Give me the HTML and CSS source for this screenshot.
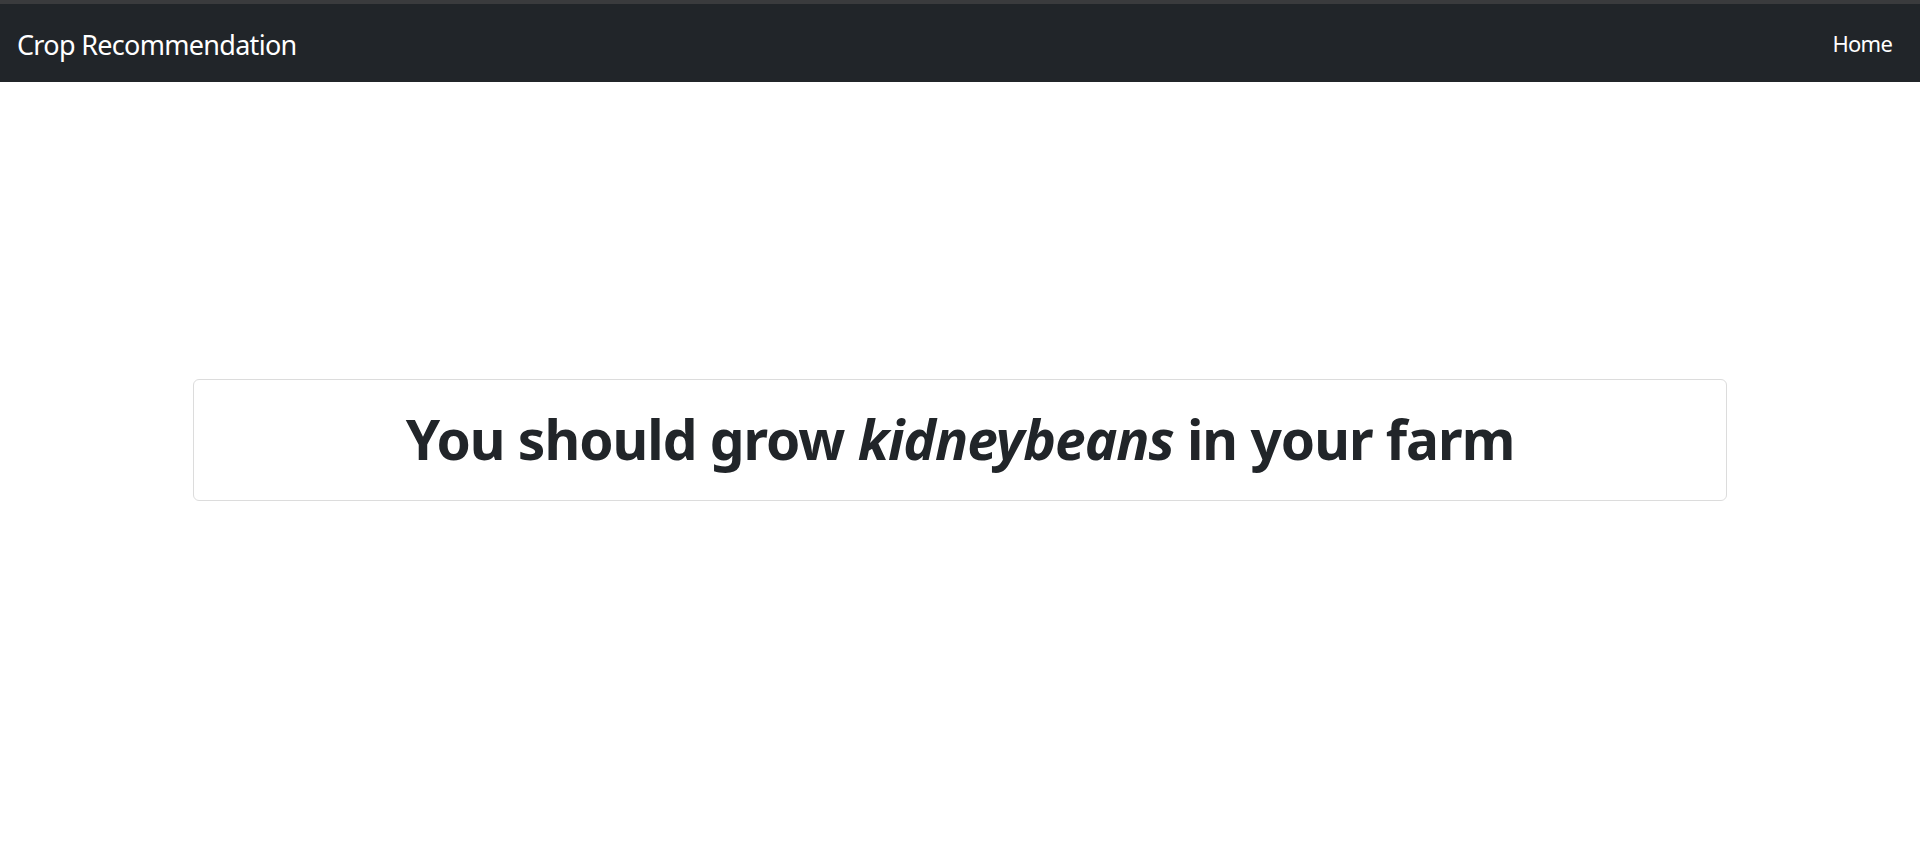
FILE: index.html
```html
<!DOCTYPE html>
<html lang="en">
<head>
<meta charset="utf-8">
<title>Crop Recommendation</title>
<link rel="stylesheet" href="styles.css">
</head>
<body>
<div class="topstrip"></div>
<nav class="navbar">
  <a class="brand" href="#">Crop Recommendation</a>
  <a class="nav-link" href="#">Home</a>
</nav>
<main class="main">
  <div class="card">
    <h1 class="result">You should grow <i>kidneybeans</i> in your farm</h1>
  </div>
</main>
</body>
</html>
```
FILE: styles.css
```css
* { box-sizing: border-box; }
html, body { margin: 0; padding: 0; background: #fff; }
body { font-family: "Noto Sans", "Open Sans", sans-serif; color: #212529; }
.topstrip { height: 4px; background: #3a3b3d; }
.navbar {
  height: 78px;
  background: #212529;
  display: flex;
  align-items: center;
  justify-content: space-between;
  padding: 0 28px 0 17px;
}
.brand { color: #fff; text-decoration: none; font-size: 27px; letter-spacing: -0.7px; line-height: 1; margin-top: 2px; }
.nav-link { color: #fff; text-decoration: none; font-size: 22px; letter-spacing: -0.8px; line-height: 1; margin-top: 0; }
.main { padding-top: 297px; display: flex; justify-content: center; }
.card {
  width: 1534px;
  height: 122px;
  border: 1px solid #dcdcdc;
  border-radius: 6px;
  display: flex;
  align-items: center;
  justify-content: center;
}
.result { margin: 0 0 2px; font-size: 55px; letter-spacing: -1px; font-weight: 700; line-height: 1.2; color: #212529; }
.result i { font-style: italic; }
```
